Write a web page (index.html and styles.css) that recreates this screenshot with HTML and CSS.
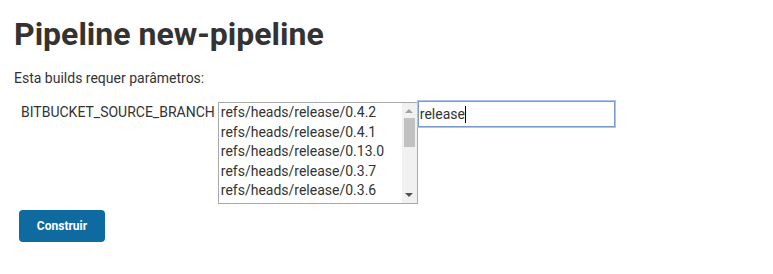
FILE: index.html
```html
<!DOCTYPE html>
<html lang="pt">
<head>
  <meta charset="UTF-8" />
  <title>Pipeline new-pipeline</title>
  <link rel="stylesheet" href="styles.css">
</head>
<body>
  <div class="page">
    <h1>Pipeline new-pipeline</h1>
    <p class="intro">Esta builds requer parâmetros:</p>

    <form class="params">
      <div class="param">
        <label class="param-name">BITBUCKET_SOURCE_BRANCH</label>
        <div class="branch-list">
          <div class="options">
            <div class="option">refs/heads/release/0.4.2</div>
            <div class="option">refs/heads/release/0.4.1</div>
            <div class="option">refs/heads/release/0.13.0</div>
            <div class="option">refs/heads/release/0.3.7</div>
            <div class="option">refs/heads/release/0.3.6</div>
          </div>
          <div class="scrollbar">
            <span class="arrow arrow-up"></span>
            <div class="track"><span class="thumb"></span></div>
            <span class="arrow arrow-down"></span>
          </div>
        </div>
        <div class="filter"><span class="filter-text">release</span><span class="caret"></span></div>
      </div>

      <button type="button" class="build-btn">Construir</button>
    </form>
  </div>
</body>
</html>
```

FILE: styles.css
```css
* { box-sizing: border-box; }
body {
  margin: 0;
  font-family: Roboto, "Liberation Sans", sans-serif;
  color: #333;
  background: #fff;
}
.page {
  padding: 14px 14px;
}
h1 {
  margin: 0;
  font-size: 32px;
  font-weight: 700;
  line-height: 40px;
}
.intro {
  margin: 15px 0 0;
  font-size: 14px;
  line-height: 18px;
}
.params {
  margin-top: 12px;
  padding-left: 5px;
}
.param {
  display: flex;
  align-items: flex-start;
}
.param-name {
  font-size: 14px;
  padding: 4px 3px 0 2px;
  line-height: 18px;
}

/* lista de branches */
.branch-list {
  display: flex;
  width: 200px;
  height: 102px;
  margin-top: 3px;
  border: 1px solid #a9a9a9;
  font-size: 14px;
}
.options {
  flex: 1;
  overflow: hidden;
}
.option {
  padding: 0 0 0 2px;
  line-height: 19.5px;
  height: 19.5px;
  white-space: nowrap;
}
.scrollbar {
  width: 15px;
  background: #f1f1f1;
  display: flex;
  flex-direction: column;
  align-items: center;
}
.arrow {
  width: 0;
  height: 0;
  border-left: 4px solid transparent;
  border-right: 4px solid transparent;
}
.arrow-up {
  margin: 6px 0 5px;
  border-bottom: 4px solid #a3a3a3;
}
.arrow-down {
  margin: 5px 0 6px;
  border-top: 4px solid #505050;
}
.track {
  flex: 1;
  width: 100%;
  padding: 0 2px;
}
.thumb {
  display: block;
  height: 29px;
  background: #c1c1c1;
}

.filter {
  width: 197px;
  height: 26px;
  margin-top: 2px;
  border: 1px solid #7a9cc8;
  box-shadow: 0 0 0 1px #a9c4ee;
  font-size: 14px;
  padding: 4px 1px 0;
  display: flex;
  align-items: flex-start;
}
.caret {
  width: 1px;
  height: 17px;
  background: #000;
}
.build-btn {
  display: block;
  margin-top: 6px;
  width: 86px;
  height: 32px;
  border: none;
  border-radius: 4px;
  background: #0f6b9f;
  color: #fff;
  font-family: inherit;
  font-size: 12px;
  font-weight: 700;
}
```
